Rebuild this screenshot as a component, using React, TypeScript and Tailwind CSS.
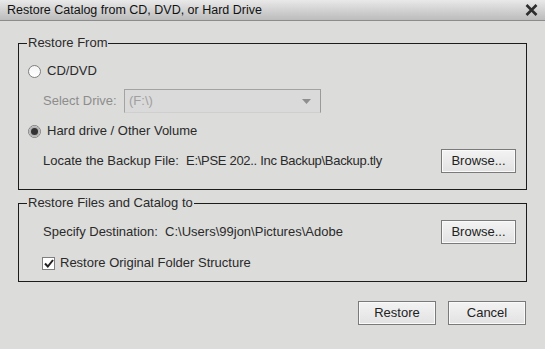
import React from 'react';

const font = { fontFamily: '"Liberation Sans", Arial, sans-serif' };

function Radio({ checked }: { checked?: boolean }) {
  return (
    <span className="w-[13px] h-[13px] rounded-full border border-[#7f7f7f] bg-gradient-to-b from-[#f4f4f4] to-[#ffffff] flex items-center justify-center shrink-0">
      {checked && <span className="w-[7px] h-[7px] rounded-full bg-[#333] ring-2 ring-[#b5b5b5]" />}
    </span>
  );
}

function Button({ label, w }: { label: string; w: string }) {
  return (
    <button
      className={`${w} h-[24px] border border-[#7a7a7a] bg-gradient-to-b from-[#f3f3f3] to-[#e2e2e2] shadow-[inset_0_0_0_1px_#fafafa] text-[13px] text-[#222] shrink-0`}
    >
      {label}
    </button>
  );
}

function Group({ title, className, children }: { title: string; className: string; children: React.ReactNode }) {
  return (
    <div className={`relative border border-[#1c1c1c] ${className}`}>
      <span className="absolute -top-[9px] left-[8px] px-[1px] bg-[#dcdcda] text-[13px] leading-[16px] text-[#2a2a2a]">
        {title}
      </span>
      {children}
    </div>
  );
}

export default function App() {
  return (
    <div className="w-[545px] h-[349px] bg-[#dcdcda] text-[#2a2a2a] overflow-hidden" style={font}>
      {/* Title bar */}
      <div className="h-[21px] flex items-center justify-between pl-[7px] pr-[6px] bg-gradient-to-b from-[#e9e9e9] to-[#bcbcbc] border-b border-[#8c8c8c]">
        <span className="text-[12.5px] text-[#111]">Restore Catalog from CD, DVD, or Hard Drive</span>
        <svg width="13" height="12" viewBox="0 0 13 12" className="mr-[1px]">
          <path d="M1.5 1 L11.5 11 M11.5 1 L1.5 11" stroke="#2e2e2e" strokeWidth="2.6" />
        </svg>
      </div>

      <div className="px-[18px] pt-[22px]">
        {/* Restore From */}
        <Group title="Restore From" className="h-[147px] pt-[15px] pl-[9px] pr-[10px] flex flex-col gap-[6px]">
          <div className="h-[24px] flex items-center gap-[6px]">
            <Radio />
            <span className="text-[13px]">CD/DVD</span>
          </div>
          <div className="h-[24px] flex items-center pl-[15px]">
            <span className="w-[81px] text-[13px] text-[#8d8d8d]">Select Drive:</span>
            <div className="w-[197px] h-[24px] border border-[#a3a3a3] border-b-[#cfcfcf] border-r-[#9a9a9a] bg-[#dadada] flex items-center justify-between pl-[4px] pr-[9px]">
              <span className="text-[13px] text-[#a0a0a0]">(F:\)</span>
              <svg width="9" height="5" viewBox="0 0 9 5">
                <path d="M0 0 H9 L4.5 5 Z" fill="#8e8e8e" />
              </svg>
            </div>
          </div>
          <div className="h-[24px] flex items-center gap-[6px]">
            <Radio checked />
            <span className="text-[13px]">Hard drive / Other Volume</span>
          </div>
          <div className="h-[24px] flex items-center justify-between pl-[15px]">
            <span className="text-[13px] whitespace-pre">
              Locate the Backup File:  <span className="tracking-[-0.3px]">E:\PSE 202.. Inc Backup\Backup.tly</span>
            </span>
            <Button label="Browse..." w="w-[75px]" />
          </div>
        </Group>

        {/* Restore Files and Catalog to */}
        <Group title="Restore Files and Catalog to" className="mt-[13px] h-[79px] pt-[16px] pl-[24px] pr-[10px] flex flex-col gap-[11px]">
          <div className="h-[24px] flex items-center justify-between">
            <span className="text-[13px] whitespace-pre">Specify Destination:  C:\Users\99jon\Pictures\Adobe</span>
            <Button label="Browse..." w="w-[75px]" />
          </div>
          <div className="h-[16px] flex items-center gap-[5px] -ml-[1px]">
            <span className="w-[13px] h-[13px] border border-[#7f7f7f] bg-white flex items-center justify-center shrink-0">
              <svg width="10" height="9" viewBox="0 0 10 9">
                <path d="M1 4.5 L3.8 7.5 L9 1" stroke="#222" strokeWidth="2" fill="none" />
              </svg>
            </span>
            <span className="text-[13px]">Restore Original Folder Structure</span>
          </div>
        </Group>

        {/* Actions */}
        <div className="mt-[19px] flex justify-end gap-[12px] pr-[1px]">
          <Button label="Restore" w="w-[78px]" />
          <Button label="Cancel" w="w-[78px]" />
        </div>
      </div>
    </div>
  );
}
